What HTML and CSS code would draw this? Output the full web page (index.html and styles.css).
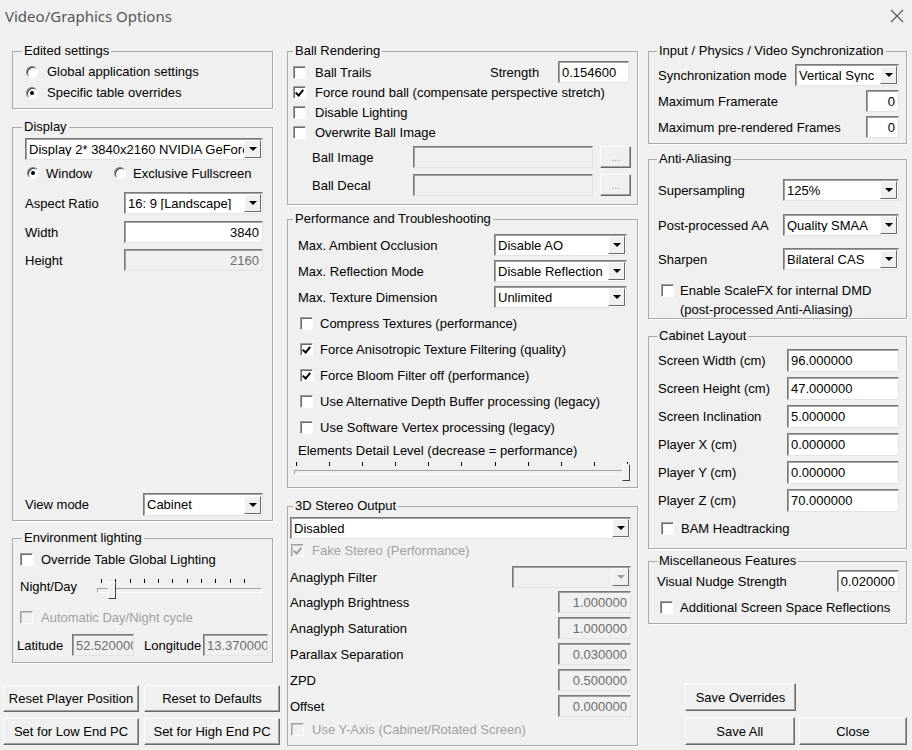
FILE: index.html
```html
<!doctype html>
<html lang="en">
<head>
	<meta charset="utf-8">
	<title>Video/Graphics Options</title>
	<link rel="stylesheet" href="styles.css">
</head>
<body>
	<div class="titlebar">
		<span class="title">Video/Graphics Options</span>
		<svg class="close-x" width="14" height="14" viewBox="0 0 14 14"><path d="M1 1 L13 13 M13 1 L1 13" stroke="#555" stroke-width="1.1" fill="none"/></svg>
	</div>

	<div class="dialog">

		<!-- left column -->
		<div class="col col-left">
			<fieldset class="group g-edited">
				<legend>Edited settings</legend>
				<div class="body b-edited">
					<div class="row r-radio"><span class="rd"></span>Global application settings</div>
					<div class="row r-radio"><span class="rd on"></span>Specific table overrides</div>
				</div>
			</fieldset>

			<fieldset class="group g-display">
				<legend>Display</legend>
				<div class="body b-display">
					<div class="combo"><span class="val">Display 2* 3840x2160 NVIDIA GeForce RTX 3080</span><span class="drop"></span></div>
					<div class="row r-modes"><span class="rd on"></span><span class="lbl-window">Window</span><span class="rd"></span>Exclusive Fullscreen</div>
					<div class="row r-aspect"><span class="lbl-disp">Aspect Ratio</span><div class="combo w139"><span class="val">16: 9 [Landscape]</span><span class="drop"></span></div></div>
					<div class="row r-width"><span class="lbl-disp">Width</span><div class="field num w139">3840</div></div>
					<div class="row r-height"><span class="lbl-disp">Height</span><div class="field num off w139">2160</div></div>
					<div class="row r-view"><span class="lbl-view">View mode</span><div class="combo w120"><span class="val">Cabinet</span><span class="drop"></span></div></div>
				</div>
			</fieldset>

			<fieldset class="group g-env">
				<legend>Environment lighting</legend>
				<div class="body b-env">
					<div class="row r-cb22"><span class="cb"></span>Override Table Global Lighting</div>
					<div class="row r-night">
						<span class="lbl-night">Night/Day</span>
						<div class="slider s-night">
							<div class="ticks"></div>
							<div class="track"><span class="thumb"></span></div>
						</div>
					</div>
					<div class="row r-cb22 r-auto dis"><span class="cb"></span>Automatic Day/Night cycle</div>
					<div class="row r-lat">
						<span class="lbl-lat">Latitude</span><div class="field off w62">52.520000</div>
						<span class="lbl-lon">Longitude</span><div class="field off w65">13.370000</div>
					</div>
				</div>
			</fieldset>

			<div class="buttons-left">
				<button class="push">Reset Player Position</button>
				<button class="push">Reset to Defaults</button>
				<button class="push">Set for Low End PC</button>
				<button class="push">Set for High End PC</button>
			</div>
		</div>

		<!-- middle column -->
		<div class="col col-mid">
			<fieldset class="group g-ball">
				<legend>Ball Rendering</legend>
				<div class="body b-ball">
					<div class="row r-ball"><span class="cb"></span><span class="grow">Ball Trails</span><span class="lbl-strength">Strength</span><div class="field w71">0.154600</div></div>
					<div class="row r-ball"><span class="cb on"></span>Force round ball (compensate perspective stretch)</div>
					<div class="row r-ball"><span class="cb"></span>Disable Lighting</div>
					<div class="row r-ball"><span class="cb"></span>Overwrite Ball Image</div>
					<div class="row r-img"><span class="lbl-img">Ball Image</span><div class="field off w180"></div><button class="push dots">...</button></div>
					<div class="row r-img r-decal"><span class="lbl-img">Ball Decal</span><div class="field off w180"></div><button class="push dots">...</button></div>
				</div>
			</fieldset>

			<fieldset class="group g-perf">
				<legend>Performance and Troubleshooting</legend>
				<div class="body b-perf">
					<div class="row r-sel"><span class="grow">Max. Ambient Occlusion</span><div class="combo w133"><span class="val">Disable AO</span><span class="drop"></span></div></div>
					<div class="row r-sel"><span class="grow">Max. Reflection Mode</span><div class="combo w133"><span class="val">Disable Reflection</span><span class="drop"></span></div></div>
					<div class="row r-sel"><span class="grow">Max. Texture Dimension</span><div class="combo w133"><span class="val">Unlimited</span><span class="drop"></span></div></div>
					<div class="perf-checks">
						<div class="row r-cb26"><span class="cb"></span>Compress Textures (performance)</div>
						<div class="row r-cb26"><span class="cb on"></span>Force Anisotropic Texture Filtering (quality)</div>
						<div class="row r-cb26"><span class="cb on"></span>Force Bloom Filter off (performance)</div>
						<div class="row r-cb26"><span class="cb"></span>Use Alternative Depth Buffer processing (legacy)</div>
						<div class="row r-cb26"><span class="cb"></span>Use Software Vertex processing (legacy)</div>
					</div>
					<div class="row r-detail">Elements Detail Level (decrease = performance)</div>
					<div class="slider s-detail">
						<div class="ticks"></div>
						<div class="track"><span class="thumb"></span></div>
					</div>
				</div>
			</fieldset>

			<fieldset class="group g-stereo">
				<legend>3D Stereo Output</legend>
				<div class="body b-stereo">
					<div class="combo"><span class="val">Disabled</span><span class="drop"></span></div>
					<div class="row r-cb22 r-fake dis"><span class="cb on"></span>Fake Stereo (Performance)</div>
					<div class="row r-filter"><span class="grow">Anaglyph Filter</span><div class="combo off w119"><span class="val"></span><span class="drop"></span></div></div>
					<div class="stereo-values">
						<div class="row r-val"><span class="grow">Anaglyph Brightness</span><div class="field num off w73">1.000000</div></div>
						<div class="row r-val"><span class="grow">Anaglyph Saturation</span><div class="field num off w73">1.000000</div></div>
						<div class="row r-val"><span class="grow">Parallax Separation</span><div class="field num off w73">0.030000</div></div>
						<div class="row r-val"><span class="grow">ZPD</span><div class="field num off w73">0.500000</div></div>
						<div class="row r-val"><span class="grow">Offset</span><div class="field num off w73">0.000000</div></div>
					</div>
					<div class="row r-yaxis dis"><span class="cb"></span>Use Y-Axis (Cabinet/Rotated Screen)</div>
				</div>
			</fieldset>
		</div>

		<!-- right column -->
		<div class="col col-right">
			<fieldset class="group g-sync">
				<legend>Input / Physics / Video Synchronization</legend>
				<div class="body b-sync">
					<div class="row r-sync"><span class="grow">Synchronization mode</span><div class="combo w104"><span class="val">Vertical Sync</span><span class="drop"></span></div></div>
					<div class="row r-sync"><span class="grow">Maximum Framerate</span><div class="field num w33">0</div></div>
					<div class="row r-sync"><span class="grow">Maximum pre-rendered Frames</span><div class="field num w33">0</div></div>
				</div>
			</fieldset>

			<fieldset class="group g-aa">
				<legend>Anti-Aliasing</legend>
				<div class="body b-aa">
					<div class="row r-aa"><span class="grow">Supersampling</span><div class="combo w116"><span class="val">125%</span><span class="drop"></span></div></div>
					<div class="row r-aa r-aa2"><span class="grow">Post-processed AA</span><div class="combo w116"><span class="val">Quality SMAA</span><span class="drop"></span></div></div>
					<div class="row r-aa r-aa3"><span class="grow">Sharpen</span><div class="combo w116"><span class="val">Bilateral CAS</span><span class="drop"></span></div></div>
					<div class="row r-scalefx"><span class="cb"></span><span class="two-lines">Enable ScaleFX for internal DMD<br>(post-processed Anti-Aliasing)</span></div>
				</div>
			</fieldset>

			<fieldset class="group g-cab">
				<legend>Cabinet Layout</legend>
				<div class="body b-cab">
					<div class="row r-cab"><span class="grow">Screen Width (cm)</span><div class="field w112">96.000000</div></div>
					<div class="row r-cab"><span class="grow">Screen Height (cm)</span><div class="field w112">47.000000</div></div>
					<div class="row r-cab"><span class="grow">Screen Inclination</span><div class="field w112">5.000000</div></div>
					<div class="row r-cab"><span class="grow">Player X (cm)</span><div class="field w112">0.000000</div></div>
					<div class="row r-cab"><span class="grow">Player Y (cm)</span><div class="field w112">0.000000</div></div>
					<div class="row r-cab"><span class="grow">Player Z (cm)</span><div class="field w112">70.000000</div></div>
					<div class="row r-cb22 r-bam"><span class="cb"></span>BAM Headtracking</div>
				</div>
			</fieldset>

			<fieldset class="group g-misc">
				<legend>Miscellaneous Features</legend>
				<div class="body b-misc">
					<div class="row r-nudge"><span class="grow">Visual Nudge Strength</span><div class="field num w62">0.020000</div></div>
					<div class="row r-cb22 r-ssr"><span class="cb"></span>Additional Screen Space Reflections</div>
				</div>
			</fieldset>

			<div class="buttons-right">
				<button class="push save-ov">Save Overrides</button>
				<div class="row save-row">
					<button class="push save-all">Save All</button>
					<button class="push close">Close</button>
				</div>
			</div>
		</div>

	</div>
</body>
</html>
```

FILE: styles.css
```css
		* {
			box-sizing: border-box;
		}
		body {
			margin: 0;
			width: 912px;
			height: 750px;
			overflow: hidden;
			background: #f0f0f0;
			color: #000;
			font: 13px/1 "Liberation Sans", Arial, sans-serif;
		}

		/* title bar */
		.titlebar {
			height: 32px;
			display: flex;
			align-items: center;
			justify-content: space-between;
			padding: 0 8px 0 5px;
		}
		.title {
			font: 15px "Noto Sans", "Liberation Sans", sans-serif;
			color: #555;
		}

		/* columns */
		.dialog {
			display: flex;
			align-items: flex-start;
			padding: 12px 0 0 12px;
		}
		.col {
			display: flex;
			flex-direction: column;
		}
		.col-left { width: 261px; }
		.col-mid { width: 351px; margin-left: 14px; }
		.col-right { width: 259px; margin-left: 10px; }

		/* group boxes */
		.group {
			margin: 0;
			padding: 0;
			min-width: 0;
			border: 1px solid #a9a9a9;
			box-shadow: 1px 1px 0 #fff;
		}
		.group legend {
			margin-left: 9px;
			padding: 0 2px;
			line-height: 14px;
		}
		.col-mid .group legend { margin-left: 5px; }
		.col-right .group legend { margin-left: 8px; }

		.g-edited { height: 65px; }
		.g-display { height: 401px; margin-top: 11px; }
		.g-env { height: 132px; margin-top: 10px; }
		.g-ball { height: 161px; }
		.g-perf { height: 276px; margin-top: 7px; }
		.g-stereo { height: 247px; margin-top: 11px; }
		.g-sync { height: 100px; }
		.g-aa { height: 167px; margin-top: 8px; }
		.g-cab { height: 220px; margin-top: 10px; }
		.g-misc { height: 70px; margin-top: 5px; }

		.row {
			display: flex;
			align-items: center;
			white-space: nowrap;
		}
		.grow { flex: 1; }
		.dis { color: #a0a0a0; }

		/* controls */
		.combo, .field {
			display: flex;
			align-items: center;
			flex-shrink: 0;
			height: 22px;
			background: #fff;
			border: 1px solid;
			border-color: #7a7a7a #e3e3e3 #e3e3e3 #7a7a7a;
			box-shadow: inset 1px 1px 0 #a0a0a0;
			overflow: hidden;
		}
		.combo .val {
			flex: 1;
			padding-left: 3px;
			overflow: hidden;
			white-space: nowrap;
		}
		.combo .drop {
			width: 17px;
			height: 18px;
			margin-right: 1px;
			display: flex;
			align-items: center;
			justify-content: center;
			background: #f0f0f0;
			border: 1px solid;
			border-color: #fff #696969 #696969 #fff;
		}
		.combo .drop:after {
			content: "";
			border-left: 4px solid transparent;
			border-right: 4px solid transparent;
			border-top: 4px solid #000;
		}
		.combo.off { background: #f0f0f0; }
		.combo.off .drop:after { border-top-color: #a0a0a0; }

		.field {
			padding: 0 3px;
			white-space: nowrap;
		}
		.field.num { justify-content: flex-end; }
		.field.off {
			background: #f0f0f0;
			color: #6d6d6d;
		}

		.cb {
			flex-shrink: 0;
			position: relative;
			width: 13px;
			height: 13px;
			background: #fff;
			border: 1px solid;
			border-color: #a0a0a0 #fff #fff #a0a0a0;
			box-shadow: inset 1px 1px 0 #696969;
		}
		.cb.on:after {
			content: "";
			position: absolute;
			left: 3px;
			top: 1px;
			width: 3px;
			height: 6px;
			border: solid #000;
			border-width: 0 2px 2px 0;
			transform: rotate(40deg);
		}
		.dis .cb {
			background: #f0f0f0;
			box-shadow: inset 1px 1px 0 #c8c8c8;
		}
		.dis .cb.on:after { border-color: #a0a0a0; }

		.rd {
			flex-shrink: 0;
			position: relative;
			width: 12px;
			height: 12px;
			margin: 0 7px 0 1px;
			border-radius: 50%;
			background: #fff;
			border: 1px solid;
			border-color: #808080 #fff #fff #808080;
			box-shadow: inset 1px 1px 0 #404040;
		}
		.rd.on:after {
			content: "";
			position: absolute;
			left: 3px;
			top: 3px;
			width: 4px;
			height: 4px;
			border-radius: 50%;
			background: #000;
		}

		.push {
			height: 27px;
			padding: 0;
			font: 13px "Liberation Sans", Arial, sans-serif;
			color: #000;
			background: #f0f0f0;
			border: 1px solid;
			border-color: #fff #696969 #696969 #fff;
			box-shadow: inset -1px -1px 0 #a0a0a0;
		}

		/* sliders */
		.slider { position: relative; }
		.slider .ticks {
			height: 4px;
			background: repeating-linear-gradient(to right, #000 0 1px, transparent 1px var(--step));
		}
		.slider .track {
			position: relative;
			height: 5px;
			margin-top: 5px;
			border: 1px solid;
			border-color: #a0a0a0 #fff #fff #a0a0a0;
		}
		.slider .thumb {
			position: absolute;
			top: -7px;
			width: 8px;
			height: 17px;
			background: #f0f0f0;
			border: 1px solid;
			border-color: #fff #404040 #404040 #fff;
		}
		.s-night {
			width: 165px;
			--step: 14.3px;
		}
		.s-night .ticks { margin: 0 4px; }
		.s-night .thumb { left: 10px; }
		.s-detail {
			height: 22px;
			margin: 0 -4px;
			--step: 33.1px;
		}
		.s-detail .ticks { margin: 2px 2px 0; }
		.s-detail .track { margin-top: 4px; }
		.s-detail .thumb { right: 0; }

		/* widths */
		.w33 { width: 33px; }
		.w62 { width: 62px; }
		.w65 { width: 65px; }
		.w71 { width: 71px; }
		.w73 { width: 73px; }
		.w104 { width: 104px; }
		.w112 { width: 112px; }
		.w116 { width: 116px; }
		.w119 { width: 119px; }
		.w120 { width: 120px; }
		.w133 { width: 133px; }
		.w139 { width: 139px; }
		.w180 { width: 180px; }

		/* left column */
		.b-edited { padding: 3px 9px 0 12px; }
		.r-radio { height: 21px; }
		.r-radio .rd { margin-right: 9px; }

		.b-display { padding: 4px 9px 0 12px; }
		.r-modes { height: 26px; }
		.r-modes .rd { margin-left: 2px; }
		.lbl-window { width: 66px; }
		.lbl-disp { width: 99px; }
		.lbl-view { width: 118px; }
		.r-aspect { margin-top: 6px; height: 22px; }
		.r-width { margin-top: 7px; height: 22px; }
		.r-height { margin-top: 6px; height: 22px; }
		.r-view { margin-top: 222px; height: 23px; }
		.r-view .combo { height: 23px; }

		.b-env { padding: 3px 0 0 4px; }
		.r-cb22 { height: 22px; }
		.b-env .cb { margin: 0 8px 0 3px; }
		.r-night { height: 28px; margin-top: 2px; }
		.lbl-night { width: 80px; padding-left: 3px; }
		.r-auto { margin-top: 6px; }
		.r-lat { height: 22px; margin-top: 6px; }
		.lbl-lat { width: 55px; }
		.lbl-lon { width: 59px; margin-left: 10px; }

		.buttons-left {
			display: grid;
			grid-template-columns: 136px 136px;
			column-gap: 5px;
			row-gap: 6px;
			margin: 22px 0 0 -9px;
		}

		/* middle column */
		.b-ball { padding: 4px 8px 0 5px; }
		.r-ball { height: 20px; }
		.r-ball .cb { margin-right: 9px; }
		.lbl-strength { width: 68px; }
		.r-img { height: 22px; margin-top: 4px; }
		.r-decal { margin-top: 6px; }
		.lbl-img { width: 101px; margin-left: 19px; flex-shrink: 0; }
		.dots {
			flex-shrink: 0;
			width: 31px;
			height: 22px;
			margin-left: 7px;
			font-size: 10px;
			color: #a0a0a0;
		}

		.b-perf { padding: 8px 10px 0 10px; }
		.r-sel { height: 22px; margin-bottom: 4px; }
		.perf-checks { margin-top: -2px; }
		.r-cb26 { height: 26px; }
		.r-cb26 .cb { margin: 0 7px 0 2px; }
		.r-detail { height: 20px; }

		.b-stereo { padding: 4px 6px 0 2px; }
		.r-fake .cb { margin: 0 8px 0 1px; }
		.r-filter { height: 22px; margin-top: 5px; }
		.stereo-values { margin-top: 3px; }
		.r-val { height: 22px; margin-bottom: 4px; }
		.r-yaxis { height: 20px; margin-top: -2px; }
		.r-yaxis .cb { margin: 0 8px 0 1px; }

		/* right column */
		.b-sync { padding: 6px 7px 0 9px; }
		.r-sync { height: 22px; margin-bottom: 4px; }

		.b-aa { padding: 13px 7px 0 9px; }
		.r-aa { height: 22px; }
		.r-aa2 { margin-top: 13px; }
		.r-aa3 { margin-top: 12px; }
		.r-scalefx {
			align-items: flex-start;
			margin-top: 11px;
		}
		.r-scalefx .cb { margin: 3px 6px 0 3px; }
		.two-lines { line-height: 19px; }

		.b-cab { padding: 6px 7px 0 9px; }
		.r-cab { height: 23px; margin-bottom: 5px; }
		.r-cab .field { height: 23px; }
		.r-bam { margin-top: 1px; }
		.r-bam .cb { margin: 0 7px 0 3px; }

		.b-misc { padding: 2px 7px 0 8px; }
		.r-nudge { height: 22px; }
		.r-ssr { margin-top: 4px; }
		.r-ssr .cb { margin: 0 7px 0 3px; }

		.buttons-right {
			margin: 59px 0 0 37px;
		}
		.save-ov { width: 111px; height: 28px; }
		.save-row { margin-top: 6px; }
		.save-all { width: 111px; height: 28px; }
		.close { width: 110px; height: 28px; margin-left: 4px; }
```
